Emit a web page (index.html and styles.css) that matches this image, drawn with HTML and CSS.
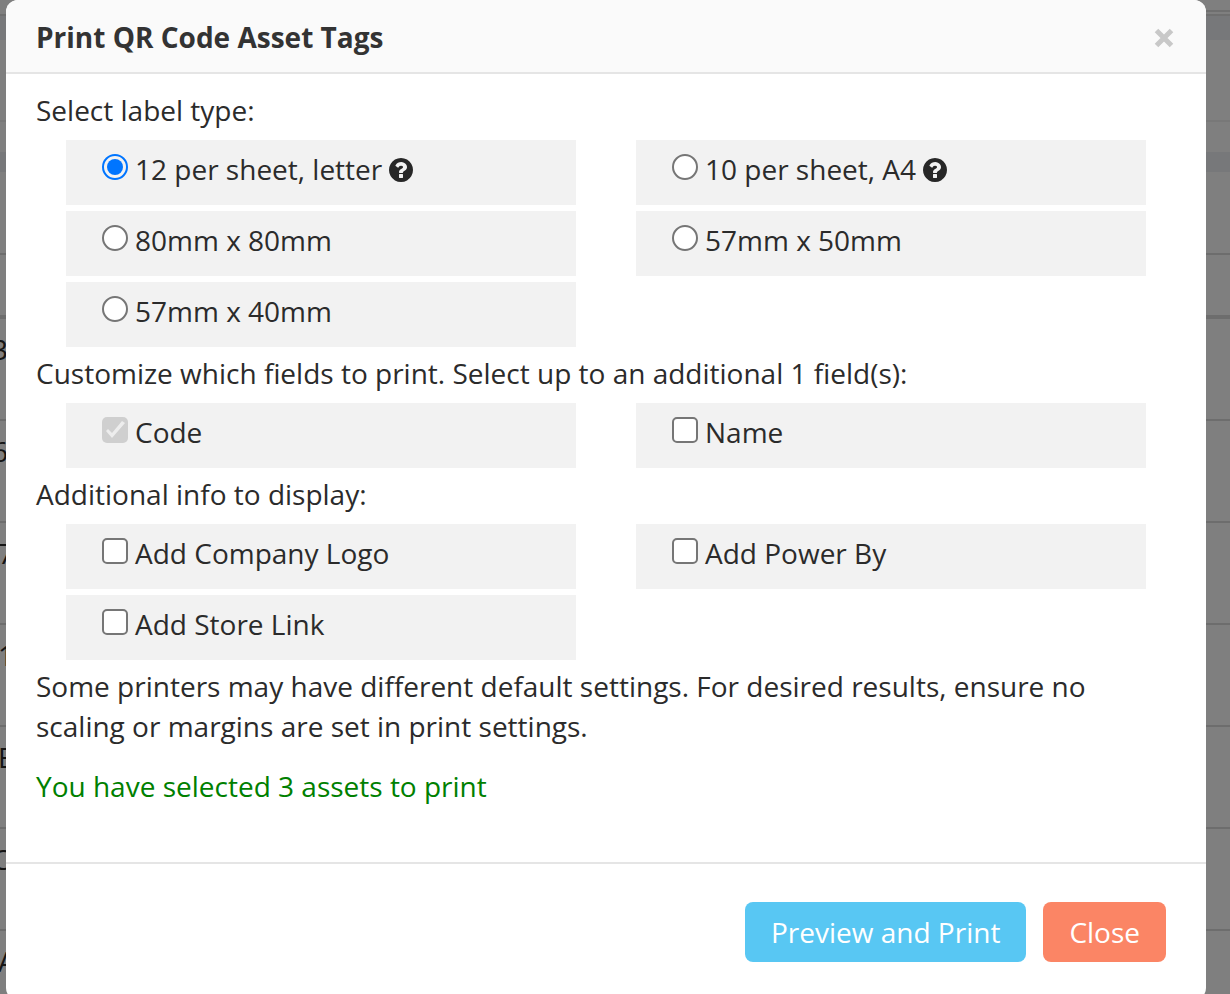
FILE: index.html
```html
<!DOCTYPE html>
<html lang="en">
<head>
    <meta charset="UTF-8">
    <meta name="viewport" content="width=device-width, initial-scale=1.0">
    <title>Print QR Code Asset Tags</title>
    <link rel="stylesheet" href="styles.css">
</head>
<body>
    <div class="page">
        <div class="topbar"><div class="topbar-tab"></div></div>
        <div class="band band-tall"></div>
        <div class="toolbar"></div>
        <div class="subbar"></div>
        <div class="band"></div>
        <div class="filters"></div>
        <div class="list-head"></div>
        <div class="list">
            <div class="list-row scrolled">3</div>
            <div class="list-row scrolled">6</div>
            <div class="list-row">7</div>
            <div class="list-row">1</div>
            <div class="list-row">E</div>
            <div class="list-row scrolled">C</div>
            <div class="list-row">A</div>
        </div>
    </div>

    <div class="backdrop">
        <div class="modal" role="dialog" aria-labelledby="modalTitle">
            <div class="modal-header">
                <h4 id="modalTitle">Print QR Code Asset Tags</h4>
                <button type="button" class="close" aria-label="Close dialog">
                    <svg viewBox="0 0 20 20" width="20" height="20"><path d="M2.5 2.5L17.5 17.5M17.5 2.5L2.5 17.5" stroke="currentColor" stroke-width="5" fill="none"/></svg>
                </button>
            </div>
            <div class="modal-body">
                <p class="group-title">Select label type:</p>
                <div class="options">
                    <label class="option"><input type="radio" name="labelType" checked> <span>12 per sheet, letter</span>
                        <svg class="help" viewBox="128 128 1536 1536"><path d="M1024 1376v-192q0-14-9-23t-23-9h-192q-14 0-23 9t-9 23v192q0 14 9 23t23 9h192q14 0 23-9t9-23zm256-672q0-88-55.5-163t-138.5-116-170-41q-243 0-371 213-15 24 8 42l132 100q7 6 19 6 16 0 25-12 53-68 86-92 34-24 86-24 48 0 85.5 26t37.5 59q0 38-20 61t-68 45q-63 28-115.5 86.5t-52.5 125.5v36q0 14 9 23t23 9h192q14 0 23-9t9-23q0-19 21.5-49.5t54.5-49.5q32-18 49-28.5t46-35 44.5-48 28-60.5 12.5-81zm384 192q0 209-103 385.5t-279.5 279.5-385.5 103-385.5-103-279.5-279.5-103-385.5 103-385.5 279.5-279.5 385.5-103 385.5 103 279.5 279.5 103 385.5z"/></svg>
                    </label>
                    <label class="option"><input type="radio" name="labelType"> <span>10 per sheet, A4</span>
                        <svg class="help" viewBox="128 128 1536 1536"><path d="M1024 1376v-192q0-14-9-23t-23-9h-192q-14 0-23 9t-9 23v192q0 14 9 23t23 9h192q14 0 23-9t9-23zm256-672q0-88-55.5-163t-138.5-116-170-41q-243 0-371 213-15 24 8 42l132 100q7 6 19 6 16 0 25-12 53-68 86-92 34-24 86-24 48 0 85.5 26t37.5 59q0 38-20 61t-68 45q-63 28-115.5 86.5t-52.5 125.5v36q0 14 9 23t23 9h192q14 0 23-9t9-23q0-19 21.5-49.5t54.5-49.5q32-18 49-28.5t46-35 44.5-48 28-60.5 12.5-81zm384 192q0 209-103 385.5t-279.5 279.5-385.5 103-385.5-103-279.5-279.5-103-385.5 103-385.5 279.5-279.5 385.5-103 385.5 103 279.5 279.5 103 385.5z"/></svg>
                    </label>
                    <label class="option"><input type="radio" name="labelType"> <span>80mm x 80mm</span></label>
                    <label class="option"><input type="radio" name="labelType"> <span>57mm x 50mm</span></label>
                    <label class="option"><input type="radio" name="labelType"> <span>57mm x 40mm</span></label>
                </div>

                <p class="group-title">Customize which fields to print. Select up to an additional 1 field(s):</p>
                <div class="options">
                    <label class="option"><input type="checkbox" name="code" checked disabled> <span>Code</span></label>
                    <label class="option"><input type="checkbox" name="name"> <span>Name</span></label>
                </div>

                <p class="group-title">Additional info to display:</p>
                <div class="options">
                    <label class="option"><input type="checkbox" name="logo"> <span>Add Company Logo</span></label>
                    <label class="option"><input type="checkbox" name="powerBy"> <span>Add Power By</span></label>
                    <label class="option"><input type="checkbox" name="storeLink"> <span>Add Store Link</span></label>
                </div>

                <p class="note">Some printers may have different default settings. For desired results, ensure no scaling or margins are set in print settings.</p>
                <p class="selected">You have selected 3 assets to print</p>
            </div>
            <div class="modal-footer">
                <button type="button" class="btn btn-info">Preview and Print</button>
                <button type="button" class="btn btn-danger">Close</button>
            </div>
        </div>
    </div>
</body>
</html>
```
FILE: styles.css
```css
* {
    box-sizing: border-box;
}

body {
    margin: 0;
    height: 100vh;
    overflow: hidden;
    font-family: 'Open Sans', sans-serif;
    font-size: 28px;
    line-height: 40px;
    color: #2b2b2b;
    background-color: #fff;
}

/* page behind the dialog */
.topbar {
    display: flex;
    justify-content: flex-end;
    height: 16px;
    border-bottom: 2px solid #dedede;
}

.topbar-tab {
    width: 40px;
    height: 12px;
    border-bottom: 2px solid #dedede;
}

.band {
    height: 20px;
    background-color: #eef1f4;
}

.band-tall {
    height: 24px;
}

.toolbar {
    height: 82px;
    border-bottom: 2px solid #f0f0f0;
}

.subbar {
    height: 30px;
}

.filters {
    height: 83px;
    border-bottom: 2px solid #dadada;
}

.list-head {
    height: 64px;
    border-bottom: 4px solid #dadada;
}

.list-row {
    height: 102px;
    padding-top: 10px;
    border-bottom: 2px solid #dadada;
    text-indent: -2px;
}

.list-row.scrolled {
    text-indent: -8px;
}

/* dialog */
.backdrop {
    position: fixed;
    inset: 0;
    overflow: hidden;
    background-color: rgba(0, 0, 0, 0.5);
}

.modal {
    margin: 0 24px 0 6px;
    border-radius: 12px;
    background-color: #fff;
    overflow: hidden;
}

.modal-header {
    display: flex;
    justify-content: space-between;
    align-items: center;
    padding: 17px 30px 15px;
    background-color: #fafafa;
    border-bottom: 2px solid #e5e5e5;
}

.modal-header h4 {
    margin: 0;
    font-size: 28px;
    font-weight: bold;
    color: #333;
}

.close {
    display: flex;
    padding: 4px 2px 2px;
    border: none;
    background: none;
    color: #c8c8c8;
    cursor: pointer;
}

.modal-body {
    padding: 16px 30px 56px;
}

.modal-body p {
    margin: 0;
}

.modal-body .group-title {
    margin-bottom: 10px;
}

.options {
    display: grid;
    grid-template-columns: 1fr 1fr;
    gap: 6px 60px;
    padding: 0 30px;
    margin-bottom: 6px;
}

.option {
    display: flex;
    align-items: flex-start;
    gap: 7px;
    padding: 9px 36px 16px;
    background-color: #f2f2f2;
}

.option input {
    appearance: none;
    width: 26px;
    height: 26px;
    margin: 5px 0 0;
    border: 2px solid #767676;
    border-radius: 5px;
    background-color: #fff;
}

.option input[type="radio"] {
    border-radius: 50%;
}

.option input[type="radio"]:checked {
    padding: 3px;
    border-color: #0075ff;
    background-color: #0075ff;
    background-clip: content-box;
}

.option input[type="radio"]:checked::before {
    content: none;
}

.option input[type="checkbox"]:checked {
    border: none;
    background-color: #0075ff;
}

.option input[type="checkbox"]:checked::before {
    content: '';
    display: block;
    width: 26px;
    height: 26px;
    background-color: #fff;
    clip-path: polygon(4px 14px, 6px 12px, 10px 16px, 20px 4px, 23px 6px, 10px 21px);
}

.option input[type="checkbox"]:disabled {
    background-color: #cfcfcf;
}

.option input[type="checkbox"]:disabled::before {
    background-color: #ededed;
}

.help {
    width: 24px;
    height: 24px;
    margin-top: 9px;
    fill: #272727;
}

.modal-body .selected {
    margin-top: 20px;
    color: #008000;
}

.modal-footer {
    display: flex;
    justify-content: flex-end;
    gap: 17px;
    padding: 38px 40px;
    border-top: 2px solid #e5e5e5;
}

.btn {
    padding: 10px 26px;
    border: none;
    border-radius: 8px;
    font-family: inherit;
    font-size: 28px;
    line-height: 40px;
    color: #fff;
    cursor: pointer;
}

.btn-info {
    background-color: #58c7f3;
}

.btn-danger {
    background-color: #fb8565;
}
```
